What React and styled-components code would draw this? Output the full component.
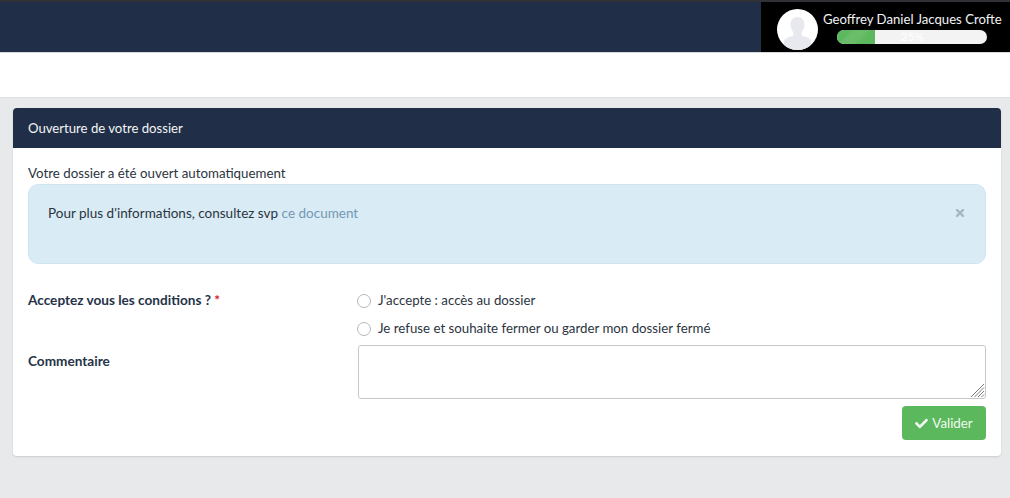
import { createGlobalStyle, styled } from "styled-components";
import { FaCheck, FaTimes } from "react-icons/fa";

const Global = createGlobalStyle`
  html, body {
    margin: 0;
    padding: 0;
    background: #e8e9eb;
    font-family: "Lato", "Liberation Sans", sans-serif;
    font-size: 14px;
    color: #2b3440;
  }
`;

export default function App() {
  return (
    <Page>
      <Global />
      <Navbar>
        <UserBlock>
          <Avatar>
            <svg viewBox="0 0 41 41">
              <defs>
                <clipPath id="avatar-clip">
                  <circle cx="20.5" cy="20.5" r="20.5" />
                </clipPath>
              </defs>
              <circle cx="20.5" cy="20.5" r="20.5" fill="#fff" />
              <path
                clipPath="url(#avatar-clip)"
                d="M20.500 8c-4.600 0-7 3.200-7 7.600 0 3.200 1.100 5.800 2.800 7.600v3.200c-3 1.300-7.200 2.200-8.600 4.200-.7 1-1 2.700-1 5.400v5h27.600v-5c0-2.700-.3-4.400-1-5.400-1.400-2-5.600-2.900-8.600-4.200v-3.200c1.700-1.800 2.800-4.400 2.800-7.600 0-4.400-2.400-7.600-7-7.600z"
                fill="#e8e9ee"
              />
            </svg>
          </Avatar>
          <UserInfo>
            <UserName>Geoffrey Daniel Jacques Crofte</UserName>
            <Progress>
              <ProgressFill />
              <ProgressLabel>25%</ProgressLabel>
            </Progress>
          </UserInfo>
        </UserBlock>
      </Navbar>
      <SubBar />
      <Content>
        <Card>
          <CardHeader>Ouverture de votre dossier</CardHeader>
          <CardBody>
            <Intro>Votre dossier a été ouvert automatiquement</Intro>
            <Alert>
              <span>
                Pour plus d'informations, consultez svp{" "}
                <AlertLink href="#">ce document</AlertLink>
              </span>
              <CloseButton>
                <FaTimes size={12} />
              </CloseButton>
            </Alert>
            <RadioRow>
              <FieldLabel>
                Acceptez vous les conditions ? <Required>*</Required>
              </FieldLabel>
              <RadioList>
                <RadioOption>
                  <RadioDot />
                  J'accepte : accès au dossier
                </RadioOption>
                <RadioOption>
                  <RadioDot />
                  Je refuse et souhaite fermer ou garder mon dossier fermé
                </RadioOption>
              </RadioList>
            </RadioRow>
            <CommentRow>
              <CommentLabel>Commentaire</CommentLabel>
              <CommentWrap>
                <CommentBox />
                <ResizeGrip viewBox="0 0 15 15">
                  <path
                    d="M14 1 1 14M14 4.500 4.500 14M14 8 8 14M14 11.500 11.500 14"
                    stroke="#77797c"
                    strokeWidth="1"
                    fill="none"
                  />
                </ResizeGrip>
              </CommentWrap>
            </CommentRow>
            <Actions>
              <SubmitButton type="button">
                <FaCheck size={13} />
                Valider
              </SubmitButton>
            </Actions>
          </CardBody>
        </Card>
      </Content>
    </Page>
  );
}

const Page = styled.div`
  width: 1010px;
  height: 498px;
  overflow: hidden;
  display: flex;
  flex-direction: column;
`;

const Navbar = styled.header`
  height: 50px;
  flex: none;
  background: #202f47;
  border-top: 2px solid #2f3135;
  border-bottom: 1px solid #d8d9dc;
  display: flex;
  justify-content: flex-end;
`;

const UserBlock = styled.div`
  width: 249px;
  background: #000;
  display: flex;
  align-items: center;
  gap: 5px;
  padding-left: 16px;
  box-sizing: border-box;
`;

const Avatar = styled.div`
  width: 41px;
  height: 41px;
  flex: none;
  margin-top: 5px;
  svg {
    width: 41px;
    height: 41px;
    display: block;
  }
`;

const UserInfo = styled.div`
  display: flex;
  flex-direction: column;
  align-items: center;
  gap: 2px;
  margin-top: -1px;
`;

const UserName = styled.div`
  color: #f2f3f5;
  font-size: 13.15px;
  line-height: 18px;
  white-space: nowrap;
`;

const Progress = styled.div`
  position: relative;
  width: 150px;
  height: 14px;
  border-radius: 7px;
  background: #f3f3f3;
  overflow: hidden;
`;

const ProgressFill = styled.div`
  width: 25%;
  height: 100%;
  background: linear-gradient(
    135deg,
    #5cb85c 0 25%,
    #6abd6a 35% 55%,
    #5cb85c 70% 100%
  );
`;

const ProgressLabel = styled.span`
  position: absolute;
  inset: 0;
  text-align: center;
  color: #fff;
  font-size: 12px;
  line-height: 14px;
`;

const SubBar = styled.div`
  height: 44px;
  flex: none;
  background: #fff;
  border-bottom: 1px solid #dfe0e3;
`;

const Content = styled.main`
  padding: 10px 9px 0 13px;
`;

const Card = styled.section`
  background: #fff;
  border-radius: 4px;
  box-shadow: 0 1px 2px rgba(0, 0, 0, 0.12);
  height: 348px;
  overflow: hidden;
`;

const CardHeader = styled.h2`
  margin: 0;
  height: 40px;
  box-sizing: border-box;
  padding: 0 15px;
  display: flex;
  align-items: center;
  background: #202f47;
  color: #f4f5f7;
  font-size: 13.15px;
  font-weight: 400;
`;

const CardBody = styled.div`
  padding: 16px 15px 0;
`;

const Intro = styled.p`
  margin: 0;
  height: 20px;
  line-height: 19px;
  font-size: 13.3px;
`;

const Alert = styled.div`
  height: 80px;
  box-sizing: border-box;
  padding: 19px 19px;
  display: flex;
  justify-content: space-between;
  align-items: flex-start;
  line-height: 19px;
  font-size: 13.5px;
  background: #d9ebf5;
  border: 1px solid #d1e5f0;
  border-radius: 10px;
`;

const AlertLink = styled.a`
  color: #7498b3;
  text-decoration: none;
`;

const CloseButton = styled.span`
  color: #a3b4c0;
  display: flex;
  margin: 3px 0 0;
`;

const RadioRow = styled.div`
  display: grid;
  grid-template-columns: 329px 1fr;
  padding-top: 27px;
`;

const FieldLabel = styled.label`
  font-size: 13.6px;
  font-weight: 700;
  line-height: 19px;
  color: #253247;
`;

const CommentLabel = styled(FieldLabel)`
  margin-top: 7px;
`;

const Required = styled.span`
  color: #d9142b;
`;

const RadioList = styled.div`
  display: flex;
  flex-direction: column;
  gap: 9px;
`;

const RadioOption = styled.div`
  display: flex;
  align-items: center;
  gap: 7px;
  font-size: 13.27px;
  line-height: 19px;
  height: 19px;
`;

const RadioDot = styled.span`
  width: 14px;
  height: 14px;
  box-sizing: border-box;
  flex: none;
  border-radius: 50%;
  border: 1px solid #b5b8bc;
  background: #fff;
`;

const CommentRow = styled.div`
  display: grid;
  grid-template-columns: 330px 1fr;
  padding-top: 7px;
`;

const CommentWrap = styled.div`
  position: relative;
  height: 54px;
`;

const CommentBox = styled.textarea`
  height: 54px;
  box-sizing: border-box;
  display: block;
  width: 100%;
  margin: 0;
  border: 1px solid #c4c6c9;
  border-radius: 3px;
  background: #fff;
  resize: none;
`;

const ResizeGrip = styled.svg`
  position: absolute;
  right: 1px;
  bottom: 1px;
  width: 15px;
  height: 15px;
`;

const Actions = styled.div`
  display: flex;
  justify-content: flex-end;
  padding-top: 7px;
`;

const SubmitButton = styled.button`
  width: 84px;
  height: 34px;
  border: none;
  border-radius: 4px;
  background: #5cb85c;
  color: #f2f8f2;
  font-family: inherit;
  font-size: 13.3px;
  display: flex;
  align-items: center;
  justify-content: center;
  gap: 4px;
`;
